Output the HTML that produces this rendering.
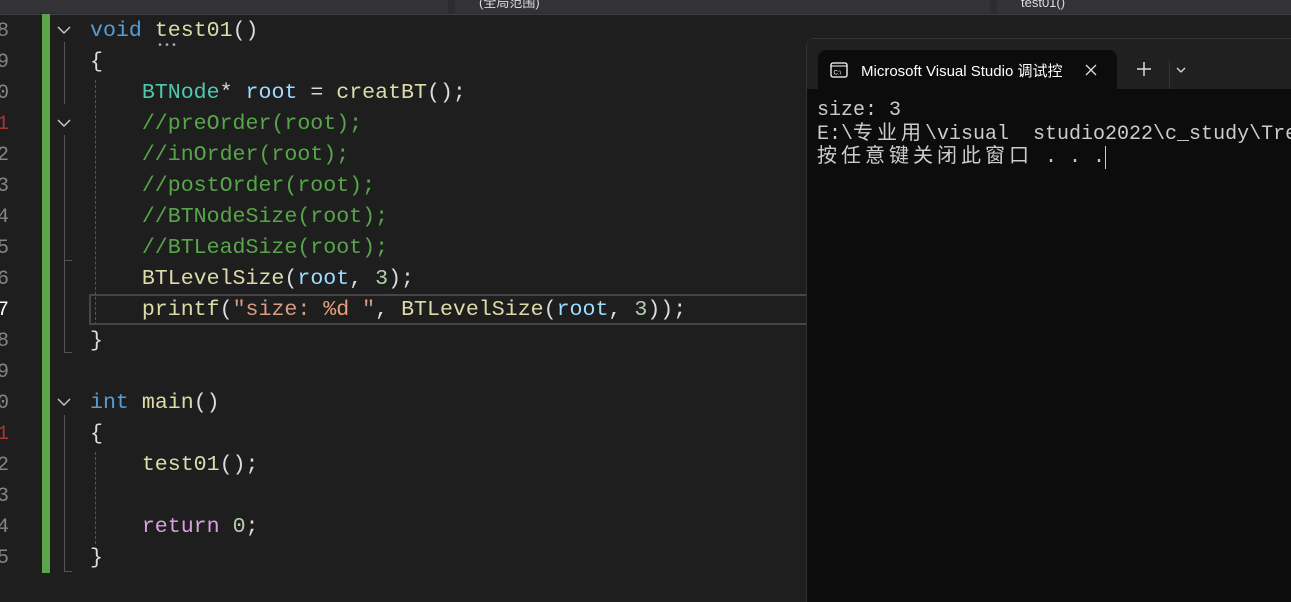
<!DOCTYPE html>
<html><head><meta charset="utf-8"><style>
body{margin:0;width:1291px;height:601px;background:#1e1e1e;overflow:hidden;position:relative;font-family:"Liberation Mono","Noto Sans CJK SC",monospace}
.top{position:absolute;left:0;top:0;width:1291px;height:14px;background:#2d2d30;border-bottom:1px solid #3f3f46}
.dd{position:absolute;top:0;height:13px;background:#333337;color:#ddd;font:13px "Liberation Sans","Noto Sans CJK SC",sans-serif;line-height:6px;overflow:hidden}
.ln{position:absolute;left:-10px;width:19px;text-align:right;color:#858585;font-size:20px;line-height:31px}
.code{position:absolute;left:90px;font-size:21.6px;line-height:31px;white-space:pre;color:#dcdcdc}
.k{color:#569cd6}.f{color:#dcdcaa}.t{color:#4ec9b0}.v{color:#9cdcfe}.c{color:#57a64a}.s{color:#d69d85}.n{color:#b5cea8}.r{color:#d8a0df}
.green{position:absolute;left:42px;top:14px;width:8px;height:559px;background:#57a64a}
.fold{position:absolute;left:56px;width:16px;height:14px}
.vl{position:absolute;left:64px;width:1px;background:#555}
.dash{position:absolute;left:95px;width:0;border-left:1px dashed #555}
.term{position:absolute;left:806px;top:38px;width:485px;height:563px;background:#0c0c0c;border-radius:8px 0 0 0;border-left:1px solid #333;border-top:1px solid #333}
.tbar{position:absolute;left:0;top:0;width:485px;height:50px;background:#202020;border-radius:8px 0 0 0}
.tab{position:absolute;left:11px;top:11px;width:299px;height:40px;background:#0c0c0c;border-radius:8px 8px 0 0}
.tt{position:absolute;left:43px;top:10px;color:#fff;font:15px "Liberation Sans","Noto Sans CJK SC",sans-serif;white-space:nowrap}
.out{position:absolute;left:10px;top:60px;color:#cccccc;font-size:20px;line-height:23.5px;white-space:pre}
.cj{letter-spacing:4px}
</style></head><body>
<div class="top"></div>
<div class="dd" style="left:0;width:448px"></div>
<div class="dd" style="left:455px;width:535px;padding-left:24px;box-sizing:border-box">(全局范围)</div>
<div class="dd" style="left:997px;width:294px;padding-left:24px;box-sizing:border-box">test01()</div>

<div class="ln" style="top:16px">8</div><div class="ln" style="top:47px">9</div><div class="ln" style="top:78px">0</div><div class="ln" style="top:109px;color:#a33">1</div><div class="ln" style="top:140px">2</div><div class="ln" style="top:171px">3</div><div class="ln" style="top:202px">4</div><div class="ln" style="top:233px">5</div><div class="ln" style="top:264px">6</div><div class="ln" style="top:295px;color:#fff">7</div><div class="ln" style="top:326px">8</div><div class="ln" style="top:357px">9</div><div class="ln" style="top:388px">0</div><div class="ln" style="top:419px;color:#a33">1</div><div class="ln" style="top:450px">2</div><div class="ln" style="top:481px">3</div><div class="ln" style="top:512px">4</div><div class="ln" style="top:543px">5</div>

<div class="green"></div>
<svg class="fold" style="top:23px" viewBox="0 0 16 14"><path d="M2 4l6 6 6-6" stroke="#ccc" stroke-width="1.4" fill="none"/></svg>
<svg class="fold" style="top:116px" viewBox="0 0 16 14"><path d="M2 4l6 6 6-6" stroke="#ccc" stroke-width="1.4" fill="none"/></svg>
<svg class="fold" style="top:395px" viewBox="0 0 16 14"><path d="M2 4l6 6 6-6" stroke="#ccc" stroke-width="1.4" fill="none"/></svg>
<div class="vl" style="top:42px;height:62px"></div>
<div class="vl" style="top:135px;height:218px"></div><div style="position:absolute;left:64px;top:352px;width:8px;height:1px;background:#555"></div>
<div style="position:absolute;left:64px;top:260px;width:8px;height:1px;background:#555"></div>
<div class="vl" style="top:415px;height:157px"></div><div style="position:absolute;left:64px;top:571px;width:8px;height:1px;background:#555"></div>
<div class="dash" style="top:80px;height:245px"></div>
<div class="dash" style="top:452px;height:92px"></div>
<div style="position:absolute;left:89px;top:294px;width:720px;height:27px;border:2px solid #464646;border-right:none"></div>

<div class="code" style="top:16px"><span class="k">void</span> <span class="f">test01</span>()</div>
<div style="position:absolute;left:157px;top:41px;color:#aaa;font-size:10px;letter-spacing:1px">•••</div>
<div class="code" style="top:47px">{</div>
<div class="code" style="top:78px">    <span class="t">BTNode</span>* <span class="v">root</span> = <span class="f">creatBT</span>();</div>
<div class="code c" style="top:109px">    //preOrder(root);</div>
<div class="code c" style="top:140px">    //inOrder(root);</div>
<div class="code c" style="top:171px">    //postOrder(root);</div>
<div class="code c" style="top:202px">    //BTNodeSize(root);</div>
<div class="code c" style="top:233px">    //BTLeadSize(root);</div>
<div class="code" style="top:264px">    <span class="f">BTLevelSize</span>(<span class="v">root</span>, <span class="n">3</span>);</div>
<div class="code" style="top:295px">    <span class="f">printf</span>(<span class="s">"size: </span><span style="color:#e8a07a">%d</span><span class="s"> "</span>, <span class="f">BTLevelSize</span>(<span class="v">root</span>, <span class="n">3</span>));</div>
<div class="code" style="top:326px">}</div>
<div class="code" style="top:388px"><span class="k">int</span> <span class="f">main</span>()</div>
<div class="code" style="top:419px">{</div>
<div class="code" style="top:450px">    <span class="f">test01</span>();</div>
<div class="code" style="top:512px">    <span class="r">return</span> <span class="n">0</span>;</div>
<div class="code" style="top:543px">}</div>

<div class="term">
 <div class="tbar"></div>
 <div class="tab">
  <svg style="position:absolute;left:12px;top:12px" width="18" height="16" viewBox="0 0 18 16"><rect x="1" y="1" width="16" height="14" rx="2" fill="none" stroke="#fff" stroke-width="1.3"/><line x1="1" y1="4" x2="17" y2="4" stroke="#fff"/><text x="3.5" y="12.5" font-size="6" fill="#fff" font-family="Liberation Sans">C:\</text></svg>
  <div class="tt">Microsoft Visual Studio 调试控</div>
  <svg style="position:absolute;left:267px;top:14px" width="12" height="12" viewBox="0 0 12 12"><path d="M1 1l10 10M11 1L1 11" stroke="#ddd" stroke-width="1.3"/></svg>
 </div>
 <svg style="position:absolute;left:330px;top:23px" width="14" height="14" viewBox="0 0 14 14"><path d="M7 0v14M0 7h14" stroke="#ddd" stroke-width="1.5"/></svg>
 <div style="position:absolute;left:362px;top:22px;width:1px;height:28px;background:#333"></div>
 <svg style="position:absolute;left:368px;top:26px" width="12" height="10" viewBox="0 0 12 10"><path d="M2 3l4 4 4-4" stroke="#ddd" stroke-width="1.3" fill="none"/></svg>
 <div class="out">size: 3
E:\<span class="cj">专业用</span>\visual  studio2022\c_study\Tree
<span class="cj">按任意键关闭此窗口</span> . . .<span style="border-left:1px solid #ccc"></span></div>
</div>
</body></html>
